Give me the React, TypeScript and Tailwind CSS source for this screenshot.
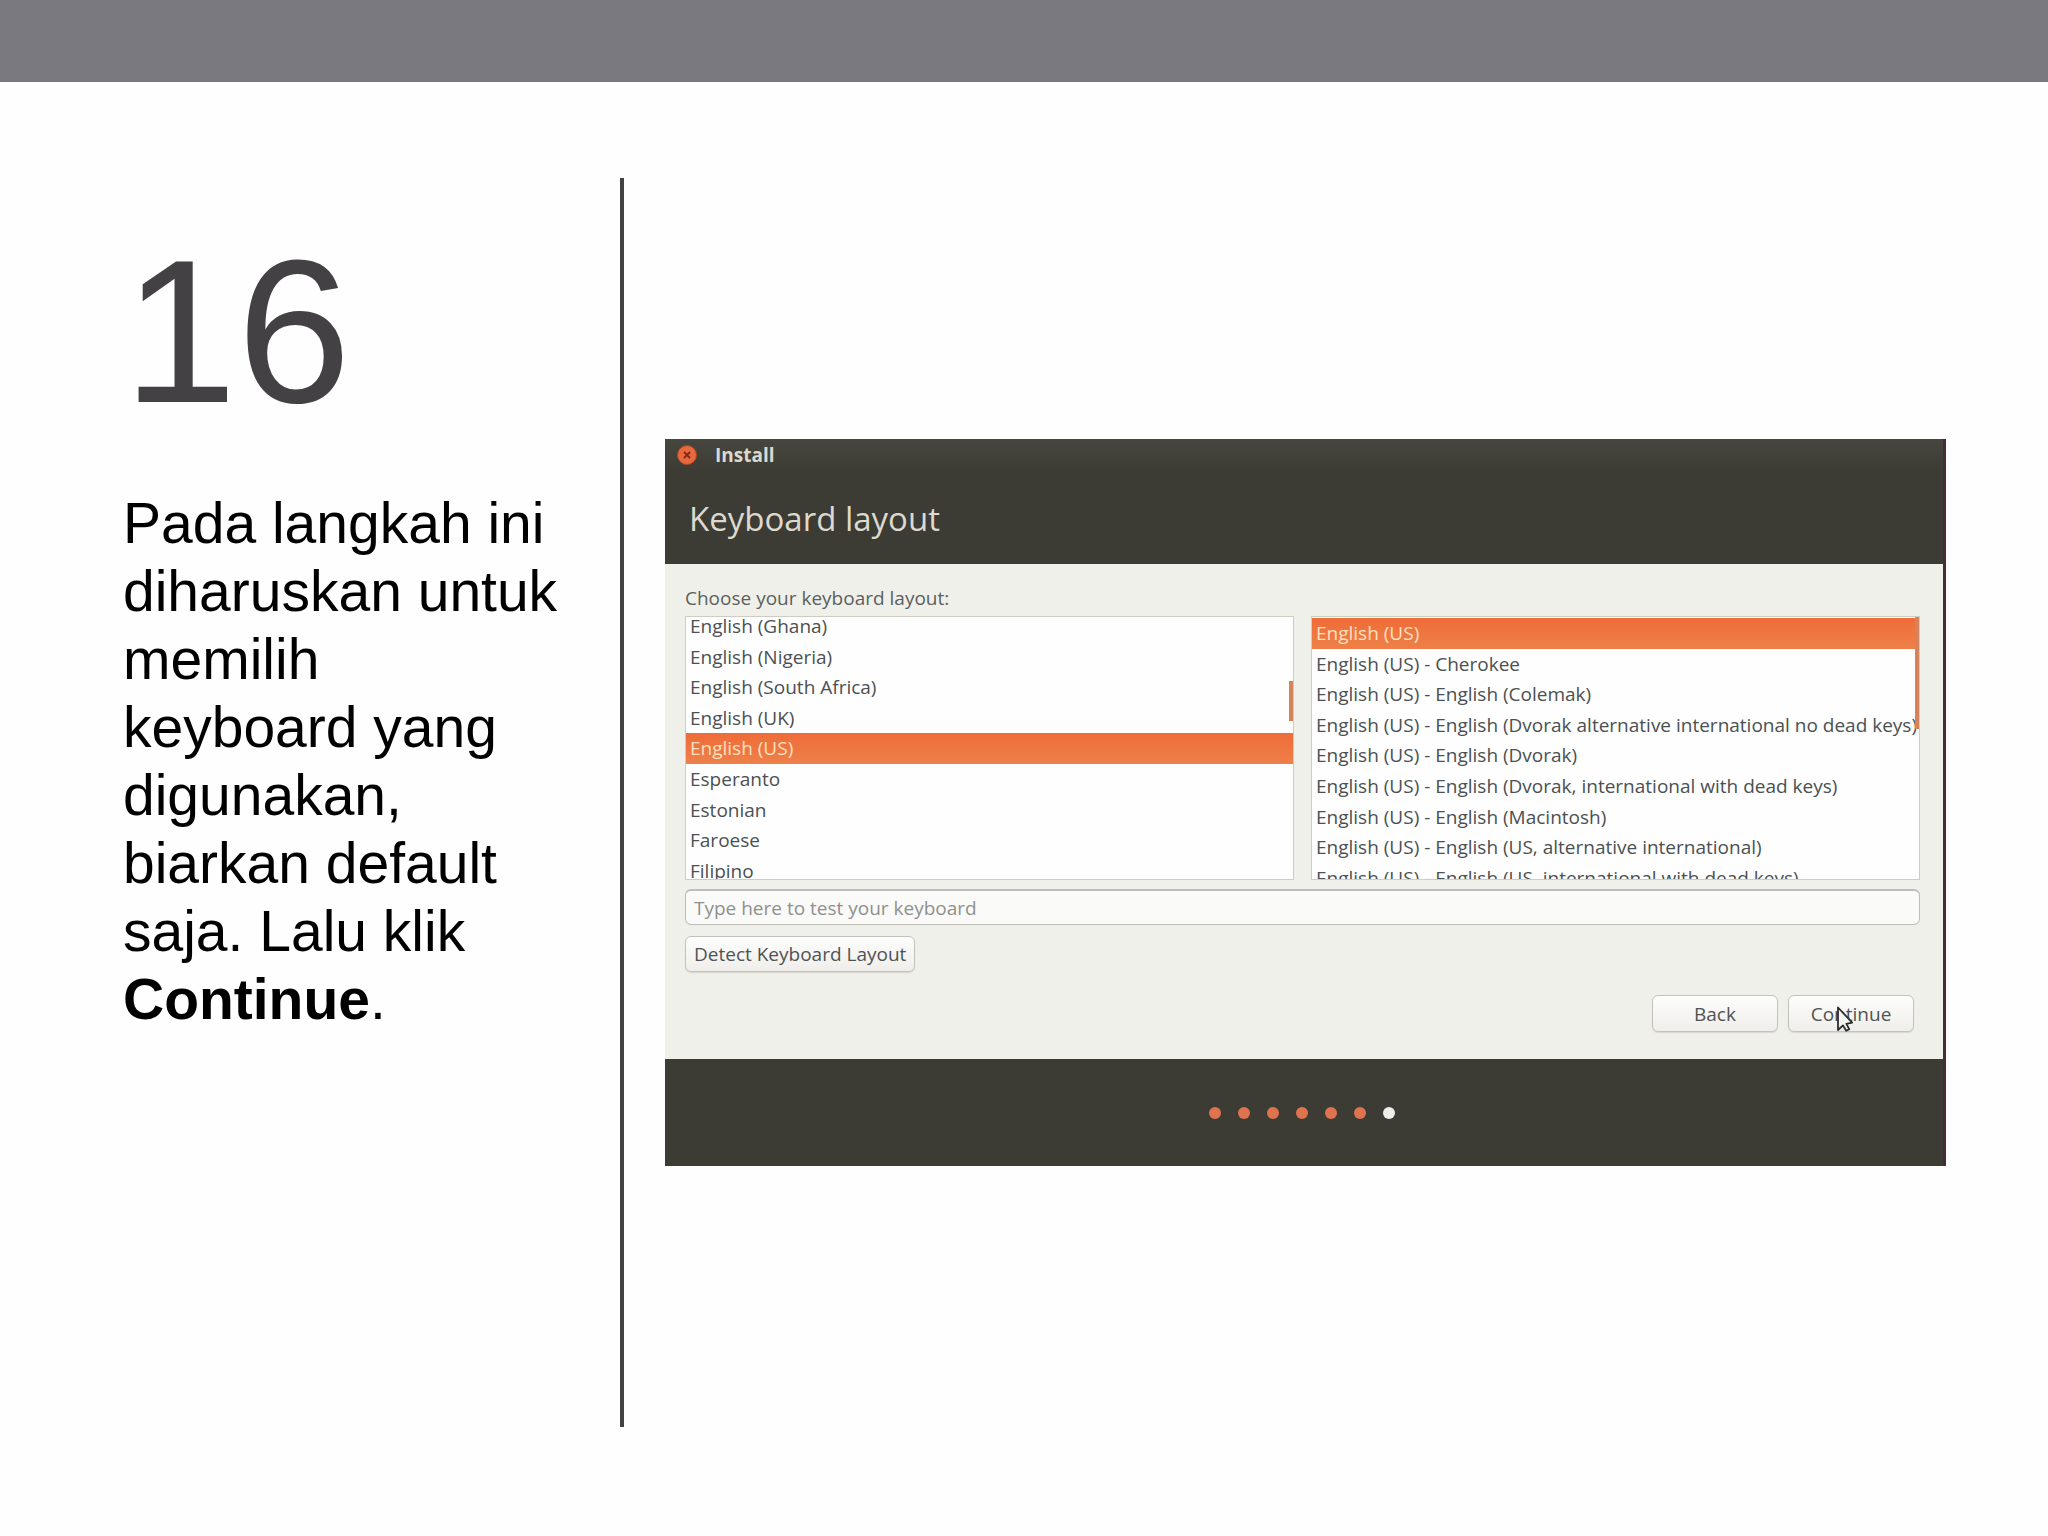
import { useState } from "react";

const layouts = [
  "English (Ghana)",
  "English (Nigeria)",
  "English (South Africa)",
  "English (UK)",
  "English (US)",
  "Esperanto",
  "Estonian",
  "Faroese",
  "Filipino",
];

const variants = [
  "English (US)",
  "English (US) - Cherokee",
  "English (US) - English (Colemak)",
  "English (US) - English (Dvorak alternative international no dead keys)",
  "English (US) - English (Dvorak)",
  "English (US) - English (Dvorak, international with dead keys)",
  "English (US) - English (Macintosh)",
  "English (US) - English (US, alternative international)",
  "English (US) - English (US, international with dead keys)",
];

const steps = [1, 2, 3, 4, 5, 6, 7];
const currentStep = 7;

const buttonClass =
  "relative rounded-md border border-[#c4c2bc] bg-gradient-to-b from-[#fdfdfc] to-[#efeeea] text-[19px] leading-6 text-[#4f5354] shadow-[0_1px_1px_#d8d6d0]";

type ListProps = {
  label: string;
  items: string[];
  value: string;
  onChange: (item: string) => void;
  // the left list is scrolled a few pixels past its first row
  scrolled?: boolean;
};

function LayoutList({ label, items, value, onChange, scrolled }: ListProps) {
  return (
    <div className="relative h-[264px] min-w-0 flex-1 overflow-hidden border border-[#cfccc3] bg-[#fefefe]">
      <ul
        role="listbox"
        aria-label={label}
        className={`grid h-[275px] auto-rows-fr ${scrolled ? "-mt-1.5" : "mt-px"}`}
      >
        {items.map((item) => (
          <li
            key={item}
            role="option"
            aria-selected={item === value}
            onClick={() => onChange(item)}
            className={`flex items-center whitespace-nowrap pl-1 text-[19px] leading-6 ${
              item === value
                ? "bg-gradient-to-b from-[#ee6c38] to-[#ee8049] text-[#fde0c0]"
                : "text-[#4b5052]"
            }`}
          >
            {item}
          </li>
        ))}
      </ul>
      <div
        className={`absolute right-0 w-1 bg-[#d4835b] ${
          scrolled ? "top-16 h-10" : "top-0 h-28"
        }`}
      />
    </div>
  );
}

function Pointer() {
  return (
    <svg
      viewBox="0 0 16 26"
      className="pointer-events-none absolute left-12 top-2.5 h-[26px] w-4"
      aria-hidden="true"
    >
      <path
        d="M1 1.5V24l5-4.6 3.2 5.4 3-1.6-2.8-5.4 5.8-1.2Z"
        fill="#f4f4f1"
        stroke="#2b2b2b"
        strokeWidth="1.8"
        strokeLinejoin="round"
      />
    </svg>
  );
}

function InstallerWindow() {
  const [layout, setLayout] = useState("English (US)");
  const [variant, setVariant] = useState("English (US)");

  return (
    <section className="w-full border-r-[3px] border-[#4a2b38] bg-[#f0f0ea] font-['Open_Sans',sans-serif]">
      {/* Title bar and heading */}
      <header className="bg-[#3c3b34] text-[#dcd9cf]">
        <div className="flex h-8 items-center gap-[18px] bg-gradient-to-b from-[#47463f] to-[#3c3b34] pl-3">
          <button type="button" aria-label="Close" className="h-5 w-5">
            <svg viewBox="0 0 20 20" className="h-5 w-5" aria-hidden="true">
              <circle cx="10" cy="10" r="9.5" fill="#e8673c" stroke="#a84a26" />
              <path d="M7 7l6 6M13 7l-6 6" stroke="#7c2b12" strokeWidth="1.8" />
            </svg>
          </button>
          <span className="text-[19px] font-bold leading-6">Install</span>
        </div>
        <h2 className="h-[93px] pl-6 pt-6 text-[33px] leading-[48px]">
          Keyboard layout
        </h2>
      </header>

      {/* Form */}
      <div className="pb-[27px] pl-5 pr-[23px] pt-5">
        <p className="mb-1 text-[19px] leading-7 text-[#5b5f5f]">
          Choose your keyboard layout:
        </p>
        <div className="flex gap-[17px]">
          <LayoutList
            label="Keyboard layout"
            items={layouts}
            value={layout}
            onChange={setLayout}
            scrolled
          />
          <LayoutList
            label="Layout variant"
            items={variants}
            value={variant}
            onChange={setVariant}
          />
        </div>
        <input
          type="text"
          aria-label="Type here to test your keyboard"
          placeholder="Type here to test your keyboard"
          className="mt-[9px] block h-9 w-full rounded-md border border-t-2 border-[#bfbdb7] bg-[#fafaf8] px-2 text-[19px] leading-6 text-[#4b5052] outline-none placeholder:text-[#8f9190]"
        />
        <button type="button" className={`${buttonClass} mt-[11px] block h-9 px-2`}>
          Detect Keyboard Layout
        </button>
        <div className="mt-[23px] flex justify-end gap-2.5 pr-1.5">
          <button type="button" className={`${buttonClass} h-[37px] w-[126px]`}>
            Back
          </button>
          <button type="button" className={`${buttonClass} h-[37px] w-[126px]`}>
            Continue
            <Pointer />
          </button>
        </div>
      </div>

      {/* Progress */}
      <footer className="flex h-[107px] items-center justify-center gap-[17px] bg-[#3c3b34] pr-1">
        {steps.map((step) => (
          <span
            key={step}
            className={`h-3 w-3 rounded-full ${
              step === currentStep ? "bg-[#eeeeea]" : "bg-[#df7350]"
            }`}
          />
        ))}
      </footer>
    </section>
  );
}

export default function App() {
  return (
    <div className="flex min-h-screen flex-col bg-[#fefefe] font-['Liberation_Sans',Arial,sans-serif]">
      <div className="h-[82px] bg-[#7a797f]" />
      <main className="flex flex-1 pb-[109px] pl-[123px] pr-[102px] pt-24">
        <div className="w-[501px] shrink-0 border-r-4 border-[#434144] pr-14 pt-[50px]">
          <h1 className="text-[205px] leading-none text-[#434144]">16</h1>
          <p className="mt-14 text-[57px] leading-[68px] text-black">
            Pada langkah ini diharuskan untuk memilih keyboard yang digunakan,
            biarkan default saja. Lalu klik <strong>Continue</strong>.
          </p>
        </div>
        <div className="flex min-w-0 flex-1 items-center pl-[41px]">
          <InstallerWindow />
        </div>
      </main>
    </div>
  );
}
